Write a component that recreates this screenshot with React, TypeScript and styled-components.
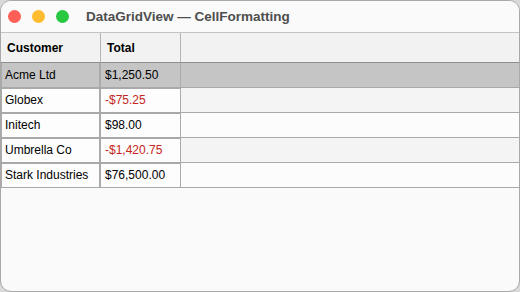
import React from 'react';
import styled, { createGlobalStyle } from 'styled-components';

interface Row {
  customer: string;
  total: number;
}

const rows: Row[] = [
  { customer: 'Acme Ltd', total: 1250.5 },
  { customer: 'Globex', total: -75.25 },
  { customer: 'Initech', total: 98 },
  { customer: 'Umbrella Co', total: -1420.75 },
  { customer: 'Stark Industries', total: 76500 },
];

const formatMoney = (value: number) => {
  const abs = Math.abs(value).toLocaleString('en-US', {
    minimumFractionDigits: 2,
    maximumFractionDigits: 2,
  });
  return value < 0 ? `-$${abs}` : `$${abs}`;
};

const App: React.FC = () => (
  <>
    <GlobalStyle />
    <Window>
      <TitleBar>
        <Lights>
          <Light color="#fe5f57" />
          <Light color="#febc2e" />
          <Light color="#28c840" />
        </Lights>
        <Title>DataGridView — CellFormatting</Title>
      </TitleBar>
      <Grid>
        <HeaderCell>Customer</HeaderCell>
        <HeaderCell>Total</HeaderCell>
        <HeaderFiller />
        {rows.map((row, index) => {
          const selected = index === 0;
          const shaded = index % 2 === 1;
          return (
            <React.Fragment key={row.customer}>
              <Cell $selected={selected} $wide>
                {row.customer}
              </Cell>
              <Cell $selected={selected} $negative={row.total < 0}>
                {formatMoney(row.total)}
              </Cell>
              <Filler $selected={selected} $shaded={shaded} />
            </React.Fragment>
          );
        })}
      </Grid>
    </Window>
  </>
);

export default App;

const GlobalStyle = createGlobalStyle`
  html, body {
    margin: 0;
    padding: 0;
    background: #d9d9d9;
  }
  body {
    font-family: 'Liberation Sans', Arial, sans-serif;
  }
`;

const Window = styled.div`
  width: 520px;
  height: 292px;
  box-sizing: border-box;
  background: #fafafa;
  border: 1px solid #a9a9a9;
  border-radius: 11px;
  overflow: hidden;
  display: flex;
  flex-direction: column;
`;

const TitleBar = styled.div`
  height: 31px;
  display: flex;
  align-items: center;
  background: #fafafa;
`;

const Lights = styled.div`
  display: flex;
  gap: 11px;
  padding-left: 7px;
`;

const Light = styled.span<{ color: string }>`
  width: 13px;
  height: 13px;
  border-radius: 50%;
  background: ${(p) => p.color};
`;

const Title = styled.div`
  margin-left: 17px;
  font-size: 13.5px;
  font-weight: bold;
  color: #4e4e4e;
`;

const Grid = styled.div`
  display: grid;
  grid-template-columns: 100px 80px 1fr;
  grid-template-rows: 30px repeat(5, 25px);
  border-top: 1px solid #c4c4c4;
`;

const HeaderCell = styled.div`
  background: #f2f2f2;
  border-right: 1px solid #b4b4b4;
  border-bottom: 1px solid #8e8e8e;
  font-size: 12px;
  font-weight: bold;
  color: #000;
  display: flex;
  align-items: center;
  padding-left: 6px;
`;

const HeaderFiller = styled.div`
  background: #f2f2f2;
  border-bottom: 1px solid #8e8e8e;
`;

const Cell = styled.div<{
  $selected?: boolean;
  $wide?: boolean;
  $negative?: boolean;
}>`
  background: ${(p) => (p.$selected ? '#c5c5c5' : '#fdfdfd')};
  border-right: ${(p) => (p.$wide ? '2px' : '1px')} solid #aaaaaa;
  border-left: ${(p) => (p.$wide ? '1px solid #aaaaaa' : 'none')};
  border-bottom: 1px solid #a9a9a9;
  box-shadow: ${(p) => (p.$selected ? 'none' : 'inset 0 1px 0 #a9a9a9')};
  font-size: 12px;
  color: ${(p) => (p.$negative ? '#c42620' : '#000')};
  display: flex;
  align-items: center;
  padding-left: ${(p) => (p.$wide ? '3px' : '4px')};
  white-space: nowrap;
`;

const Filler = styled.div<{ $selected?: boolean; $shaded?: boolean }>`
  background: ${(p) => (p.$selected ? '#c5c5c5' : p.$shaded ? '#f4f4f4' : '#fcfcfc')};
  border-bottom: 1px solid #a9a9a9;
`;
